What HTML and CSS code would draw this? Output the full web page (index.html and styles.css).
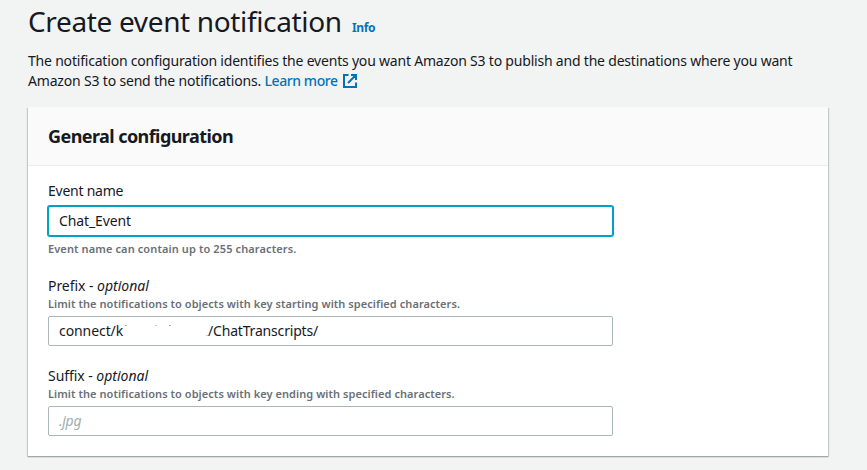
FILE: index.html
```html
<!DOCTYPE html>
<html lang="en">
<head>
<meta charset="utf-8">
<title>Create event notification</title>
<link rel="stylesheet" href="styles.css">
</head>
<body>
<main class="page">
  <header class="page-header">
    <h1 class="title">Create event notification</h1>
    <a class="info">Info</a>
  </header>
  <p class="description"><span class="sentence">The notification configuration identifies the events you want Amazon S3 to publish and the destinations where you want</span><br><span class="sentence-end">Amazon S3 to send the notifications.</span> <a class="learn-more">Learn more<svg class="external" viewBox="0 0 14 14" width="14" height="14"><path d="M5.5 1H1v12h12V8.5M8 1h5v5M12.7 1.3L5 9"/></svg></a></p>
  <section class="card">
    <div class="card-header"><h2 class="card-title">General configuration</h2></div>
    <div class="card-body">
      <div class="field">
        <div class="label">Event name</div>
        <div class="input focused"><span class="event-value">Chat_Event</span></div>
        <div class="hint below">Event name can contain up to 255 characters.</div>
      </div>
      <div class="field">
        <div class="label optional">Prefix - <em>optional</em></div>
        <div class="hint above">Limit the notifications to objects with key starting with specified characters.</div>
        <div class="input"><span class="path-start">connect/k</span><svg class="redacted" viewBox="0 0 84 14" width="84" height="14"><path d="M1 1.5h1.500M31.500 1.500h1M45 1.500h1.500M82.500 11.500h1"/></svg><span class="path-end">/ChatTranscripts/</span></div>
      </div>
      <div class="field">
        <div class="label optional">Suffix - <em>optional</em></div>
        <div class="hint above">Limit the notifications to objects with key ending with specified characters.</div>
        <div class="input placeholder">.jpg</div>
      </div>
    </div>
  </section>
</main>
</body>
</html>
```
FILE: styles.css
```css
* { box-sizing: border-box; }
body {
  margin: 0;
  min-height: 470px;
  background: #f2f3f3;
  color: #16191f;
  font: 14px/20px "Noto Sans", "Open Sans", sans-serif;
  letter-spacing: -0.2px;
  white-space: nowrap;
}
.page { width: 828px; padding: 3px 0 0 28px; }
.page-header { display: flex; align-items: baseline; height: 36px; }
.title { margin: 0; width: 324px; font-size: 28px; line-height: 36px; font-weight: 400; letter-spacing: -0.35px; }
.info { color: #0073bb; font-size: 12px; font-weight: 700; letter-spacing: -0.4px; }
.description { margin: 12px 0 16px; }
.sentence { letter-spacing: -0.2px; }
.sentence-end { letter-spacing: -0.18px; }
.learn-more { color: #0073bb; font-weight: 500; letter-spacing: -0.42px; }
.external { margin-left: 5px; vertical-align: -2px; fill: none; stroke: #0073bb; stroke-width: 2; }
.card {
  height: 349px;
  background: #fff;
  box-shadow: 0 1px 0 0 #a0a9aa, 0 1px 1px 0 rgba(0, 28, 36, .3), 1px 1px 1px 0 rgba(0, 28, 36, .15), -1px 1px 1px 0 rgba(0, 28, 36, .15);
}
.card-header { height: 59px; padding: 18px 20px 0; background: #fafafa; border-bottom: 1px solid #eaeded; }
.card-title { margin: 0; font-size: 18px; line-height: 22px; font-weight: 700; letter-spacing: -0.57px; }
.card-body { display: flex; flex-direction: column; padding: 15px 20px 20px; }
.field { width: 565px; }
.field + .field { margin-top: 20px; }
.field:first-child + .field { margin-top: 19px; }
.label { letter-spacing: -0.24px; }
.optional { letter-spacing: -0.05px; }
.optional em { letter-spacing: 0; }
.input {
  display: flex;
  align-items: center;
  height: 30px;
  padding: 0 10px;
  border: 1px solid #aab7b8;
  border-radius: 2px;
  background: #fff;
}
.focused { margin-top: 5px; border-color: #00a1c9; box-shadow: 0 0 0 1px #00a1c9; }
.hint { color: #687078; font-size: 11px; line-height: 16px; font-weight: 600; letter-spacing: 0.06px; }
.below { margin-top: 5px; letter-spacing: 0.11px; }
.above { margin-bottom: 4px; }
.event-value { letter-spacing: -0.11px; }
.path-start { width: 65px; letter-spacing: -0.08px; }
.redacted { flex: none; fill: none; stroke: #899; stroke-width: 1; }
.path-end { letter-spacing: -0.18px; }
.placeholder { color: #9fadae; font-style: italic; letter-spacing: -0.3px; }
```
